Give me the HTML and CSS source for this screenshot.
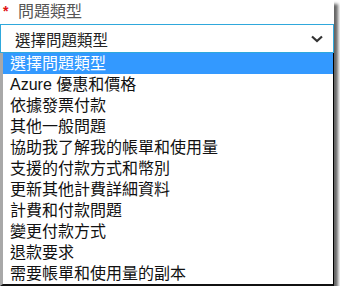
FILE: index.html
```html
<!DOCTYPE html>
<html lang="zh-Hant">
<head>
  <meta charset="UTF-8" />
  <meta name="viewport" content="width=device-width, initial-scale=1.0"/>
  <title>問題類型</title>
  <link rel="stylesheet" href="styles.css">
</head>
<body>

  <div class="shot">
    <div class="field-label"><span class="required">*</span>問題類型</div>

    <!-- 下拉選單 -->
    <div class="select-box">
      <span class="select-text">選擇問題類型</span>
      <svg class="chevron" width="12" height="8" viewBox="0 0 12 8">
        <path d="M1 1.5 L6 6 L11 1.5" fill="none" stroke="#333" stroke-width="2.2"/>
      </svg>
    </div>

    <ul class="option-list">
      <li class="option selected">選擇問題類型</li>
      <li class="option">Azure 優惠和價格</li>
      <li class="option">依據發票付款</li>
      <li class="option">其他一般問題</li>
      <li class="option">協助我了解我的帳單和使用量</li>
      <li class="option">支援的付款方式和幣別</li>
      <li class="option">更新其他計費詳細資料</li>
      <li class="option">計費和付款問題</li>
      <li class="option">變更付款方式</li>
      <li class="option">退款要求</li>
      <li class="option">需要帳單和使用量的副本</li>
    </ul>
  </div>

</body>
</html>
```

FILE: styles.css
```css
body {
  font-family: "Liberation Sans", "Noto Sans CJK TC", sans-serif;
  background-color: white;
  margin: 0;
  padding: 0;
}

/* スクリーンショットの枠と影 */
.shot {
  width: 334px;
  height: 286px;
  background-color: white;
  box-shadow: 4px 4px 3px rgba(0,0,0,0.6);
  box-sizing: border-box;
}

.field-label {
  height: 24px;
  line-height: 24px;
  font-size: 16px;
  color: #555;
  display: flex;
}

.required {
  color: #e01010;
  font-size: 14px;
  font-weight: bold;
  width: 18px;
  padding-left: 3px;
  box-sizing: border-box;
  line-height: 22px;
}

.select-box {
  height: 29px;
  border: 1px solid #2fa8dc;
  box-sizing: border-box;
  display: flex;
  align-items: center;
  justify-content: space-between;
  padding: 0 10px 0 14px;
  font-size: 15.5px;
  color: #222;
}

.chevron {
  display: block;
}

.option-list {
  list-style: none;
  margin: 0;
  padding: 0;
  width: 334px;
  border-left: 3px solid #a8a8a8;
  border-right: 1px solid #000;
  border-bottom: 2px solid #111;
  box-sizing: border-box;
  font-size: 16px;
  color: #111;
}

.option {
  height: 21px;
  line-height: 21px;
  padding-left: 7px;
  white-space: nowrap;
}

.option.selected {
  background-color: #3399ff;
  color: white;
}
```
